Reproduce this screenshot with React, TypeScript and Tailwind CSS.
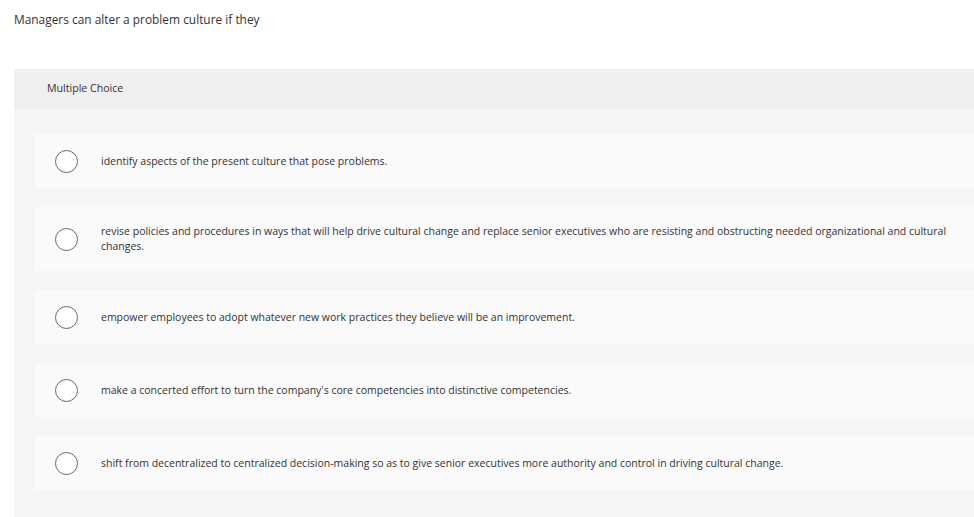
const options = [
  "identify aspects of the present culture that pose problems.",
  "revise policies and procedures in ways that will help drive cultural change and replace senior executives who are resisting and obstructing needed organizational and cultural changes.",
  "empower employees to adopt whatever new work practices they believe will be an improvement.",
  "make a concerted effort to turn the company's core competencies into distinctive competencies.",
  "shift from decentralized to centralized decision-making so as to give senior executives more authority and control in driving cultural change.",
];

export default function App() {
  return (
    <div
      className="min-h-screen bg-white text-[#333] overflow-hidden"
      style={{ fontFamily: "'Open Sans', Lato, sans-serif" }}
    >
      <p className="pl-[14px] pt-[11px] text-[11.9px] leading-[17px]">
        Managers can alter a problem culture if they
      </p>
      <div className="ml-[14px] mt-[41px] w-[980px]">
        <div className="h-[40px] bg-[#efefef] pl-[33px] flex items-center text-[10.6px]">
          Multiple Choice
        </div>
        <div className="bg-[#f5f5f5] pl-[21px] pt-[25px] pb-[40px] flex flex-col gap-[19px]">
          {options.map((o, i) => (
            <div
              key={i}
              className="bg-[#fafafa] min-h-[54px] flex items-center pl-[20px] pr-[40px] py-[5px]"
            >
              <span className="shrink-0 w-[23px] h-[23px] rounded-full border-[1.5px] border-[#5b6b7a] bg-white" />
              <span className="ml-[23px] py-[12px] text-[10.5px] leading-[15px]">{o}</span>
            </div>
          ))}
        </div>
      </div>
    </div>
  );
}
